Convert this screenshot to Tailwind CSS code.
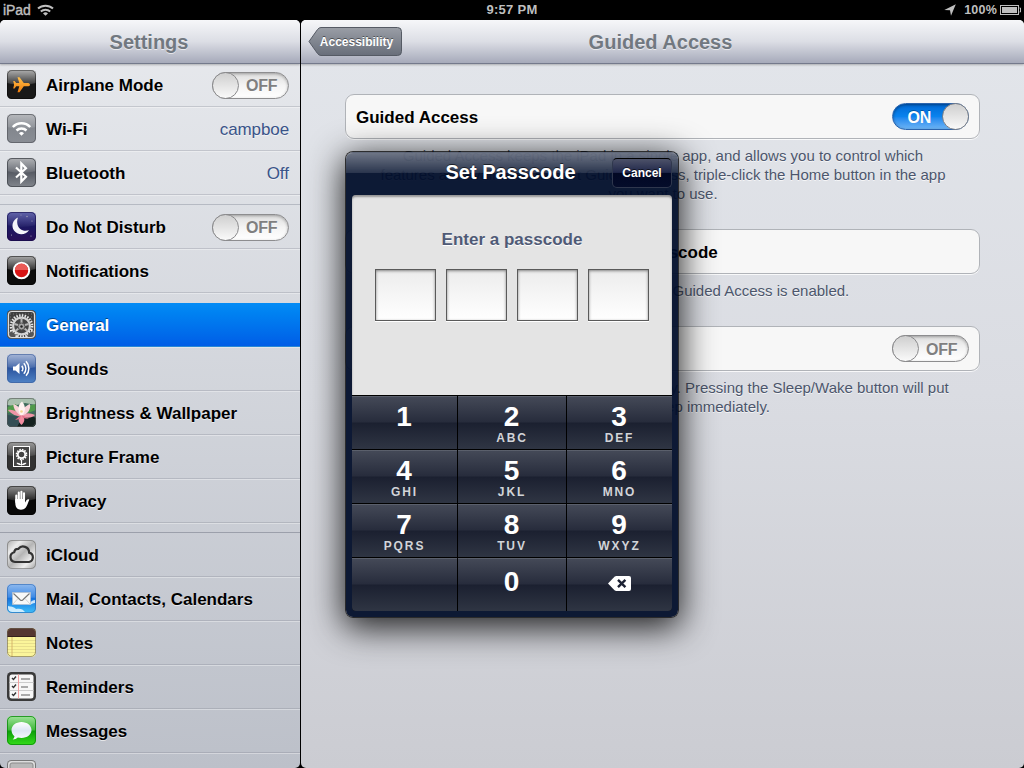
<!DOCTYPE html>
<html lang="en">
    <head>
        <meta charset="UTF-8" />
        <meta name="viewport" content="width=device-width, initial-scale=1.0" />
        <title>Settings - Guided Access</title>
        <script src="https://cdn.jsdelivr.net/npm/@tailwindcss/browser@4"></script>
    </head>
    <body class="bg-black overflow-hidden font-['Liberation_Sans',Arial,sans-serif]">
        <!-- shared gradients for the icons -->
        <svg class="absolute" width="0" height="0" aria-hidden="true">
            <defs>
                <linearGradient id="gloss" x1="0" y1="0" x2="0" y2="1">
                    <stop offset="0" stop-color="#fff" stop-opacity=".65" />
                    <stop offset="1" stop-color="#fff" stop-opacity=".12" />
                </linearGradient>
                <linearGradient id="orange" x1="0" y1="0" x2="0" y2="1">
                    <stop offset="0" stop-color="#ffc04a" />
                    <stop offset="1" stop-color="#f07d0c" />
                </linearGradient>
                <linearGradient id="gray" x1="0" y1="0" x2="0" y2="1">
                    <stop offset="0" stop-color="#7b7f86" />
                    <stop offset="1" stop-color="#8a8e95" />
                </linearGradient>
                <linearGradient id="slate" x1="0" y1="0" x2="0" y2="1">
                    <stop offset="0" stop-color="#6d7178" />
                    <stop offset=".5" stop-color="#575b64" />
                    <stop offset="1" stop-color="#82868d" />
                </linearGradient>
                <linearGradient id="night" x1="0" y1="0" x2="0" y2="1">
                    <stop offset="0" stop-color="#3c3f96" />
                    <stop offset=".5" stop-color="#1c1862" />
                    <stop offset="1" stop-color="#2a0f58" />
                </linearGradient>
                <linearGradient id="blue" x1="0" y1="0" x2="0" y2="1">
                    <stop offset="0" stop-color="#5a78b4" />
                    <stop offset=".5" stop-color="#2c559f" />
                    <stop offset="1" stop-color="#4f83c6" />
                </linearGradient>
                <linearGradient id="metal" x1="0" y1="0" x2="1" y2="1">
                    <stop offset="0" stop-color="#a9a9a9" />
                    <stop offset=".25" stop-color="#ececec" />
                    <stop offset=".5" stop-color="#b5b5b5" />
                    <stop offset=".75" stop-color="#eee" />
                    <stop offset="1" stop-color="#a0a0a0" />
                </linearGradient>
                <linearGradient id="sky" x1="0" y1="0" x2="0" y2="1">
                    <stop offset="0" stop-color="#8fb9ee" />
                    <stop offset=".45" stop-color="#3f8be6" />
                    <stop offset=".5" stop-color="#1673de" />
                    <stop offset="1" stop-color="#3fc0fa" />
                </linearGradient>
                <linearGradient id="green" x1="0" y1="0" x2="0" y2="1">
                    <stop offset="0" stop-color="#9fe39a" />
                    <stop offset=".48" stop-color="#3fb83a" />
                    <stop offset=".52" stop-color="#0c9d0a" />
                    <stop offset="1" stop-color="#35dd1a" />
                </linearGradient>
                <linearGradient id="bubble" x1="0" y1="0" x2="0" y2="1">
                    <stop offset="0" stop-color="#fff" />
                    <stop offset=".5" stop-color="#dce6f4" />
                    <stop offset="1" stop-color="#f8fbff" />
                </linearGradient>
                <clipPath id="tile"><rect width="29" height="29" rx="4.5" /></clipPath>
            </defs>
        </svg>

        <div class="relative w-[1024px] h-[768px] overflow-hidden">
            <!-- status bar -->
            <div class="h-5 flex items-center justify-between text-[#bfbfbf] text-[13px] font-bold leading-5">
                <div class="w-1/3 flex items-center pl-[3px]">
                    <span class="text-[14px] font-normal tracking-[-0.1px] [-webkit-text-stroke:0.4px_#bfbfbf]">iPad</span>
                    <svg class="ml-[6px]" width="17" height="12" viewBox="0 0 17 12" fill="none" stroke="#bfbfbf" stroke-width="2">
                        <path d="M1 4.6a11 11 0 0 1 15 0M3.8 7.5a7 7 0 0 1 9.4 0" />
                        <path d="M8.5 11.8L6 9.4a3.8 3.8 0 0 1 5 0z" fill="#bfbfbf" stroke="none" />
                    </svg>
                </div>
                <div class="tracking-[0.3px]">9:57 PM</div>
                <div class="w-1/3 flex items-center justify-end pr-[2px]">
                    <svg width="12" height="12" viewBox="0 0 12 12" fill="#bfbfbf"><path d="M11.800.200L7 11.800 6 6.300.3 5.900z" /></svg>
                    <span class="ml-[8px] text-[12.5px] tracking-[0.2px]">100%</span>
                    <svg class="ml-[3px]" width="22" height="10" viewBox="0 0 22 10">
                        <rect x=".5" y=".5" width="18" height="9" fill="none" stroke="#bfbfbf" />
                        <rect x="2" y="2" width="15" height="6" fill="#bfbfbf" />
                        <path d="M19.5 3h1v4h-1" fill="none" stroke="#bfbfbf" />
                    </svg>
                </div>
            </div>

            <div class="flex h-[748px] gap-px">
                <!-- sidebar -->
                <div class="w-[300px] flex flex-col rounded-[5px] overflow-hidden bg-linear-to-b from-[#e8eaee] to-[#bcc0c9]">
                    <div class="relative z-10 h-[44px] shrink-0 flex items-center justify-center border-b border-[#747a8c] bg-linear-to-b from-[#f6f7f9] via-[#dcdee5] to-[#a6aaba] shadow-[0_1px_2px_rgba(0,0,0,0.25)]">
                        <h1 class="text-[20px] font-bold text-[#717880] [text-shadow:0_1px_0_rgba(255,255,255,0.6)] pr-[2px] pt-px">Settings</h1>
                    </div>
                    <ul class="-mt-px text-[17px] font-bold text-black [text-shadow:0_1px_0_rgba(255,255,255,0.6)] *:h-[44px] *:flex *:items-center *:pl-[7px] *:pr-[11px] *:gap-[10px] *:border-b *:border-[#7d8290]/30 *:shadow-[0_1px_0_rgba(255,255,255,0.35)]">
                        <li>
                            <svg width="29" height="29" viewBox="0 0 29 29">
                                <rect width="29" height="29" rx="4.5" fill="#191919" />
                                <path d="M0 4.500Q0 0 4.500 0H24.500Q29 0 29 4.500V13Q14.500 17 0 13z" fill="url(#gloss)" />
                                <path d="M23 14.700c0-.9-1.200-1.600-2.600-1.600h-3.600L12.500 7.300h-2l1.800 5.800H9.200L7.600 11H6.200l.9 3.700-.9 3.700h1.400l1.600-2.100h3.100l-1.800 6h2l4.300-6h3.600c1.400 0 2.600-.7 2.600-1.600z" fill="url(#orange)" />
                                <rect x=".5" y=".5" width="28" height="28" rx="4.500" fill="none" stroke="#000" stroke-opacity=".4" />
                            </svg>
                            <span class="flex-1 pt-[2px]">Airplane Mode</span>
                            <span class="mt-px w-[77px] h-[27px] flex items-center rounded-full border border-[#8d8d8f] bg-linear-to-b from-[#dedede] via-[#f4f4f4] to-white shadow-[inset_0_1px_3px_rgba(0,0,0,0.3)] text-[#7f7f7f]">
                                <span class="size-[27px] -ml-px rounded-full border border-[#8a8a8c] bg-linear-to-b from-[#cfcfcf] to-[#fafafa]"></span>
                                <span class="ml-[7px] pt-px text-[16px] tracking-[-0.2px]">OFF</span>
                            </span>
                        </li>
                        <li>
                            <svg width="29" height="29" viewBox="0 0 29 29">
                                <rect width="29" height="29" rx="4.500" fill="url(#gray)" />
                                <path d="M0 4.500Q0 0 4.500 0H24.500Q29 0 29 4.500V13Q14.500 17 0 13z" fill="url(#gloss)" opacity=".7" />
                                <g fill="none" stroke="#fff" stroke-width="2.500">
                                    <path d="M5.800 13a12 12 0 0 1 17.400 0M9.500 16.500a7.300 7.300 0 0 1 10 0" />
                                    <path d="M14.500 21.800L12 19.200a3.800 3.800 0 0 1 5 0z" fill="#fff" stroke="none" />
                                </g>
                                <rect x=".5" y=".5" width="28" height="28" rx="4.500" fill="none" stroke="#5b5e64" stroke-opacity=".8" />
                            </svg>
                            <span class="flex-1 pt-[2px]">Wi-Fi</span>
                            <span class="pt-[2px] font-normal tracking-[-0.1px] text-[#3a5489]">campboe</span>
                        </li>
                        <li>
                            <svg width="29" height="29" viewBox="0 0 29 29">
                                <rect width="29" height="29" rx="4.500" fill="url(#slate)" />
                                <path d="M0 4.500Q0 0 4.500 0H24.500Q29 0 29 4.500V13Q14.500 17 0 13z" fill="url(#gloss)" opacity=".7" />
                                <path d="M9 9.500l10 9.200-4.700 4.800V5.500l4.700 4.800L9 19.500" fill="none" stroke="#fff" stroke-width="2.200" />
                                <rect x=".5" y=".5" width="28" height="28" rx="4.500" fill="none" stroke="#44474d" stroke-opacity=".8" />
                            </svg>
                            <span class="flex-1 pt-[2px]">Bluetooth</span>
                            <span class="pt-[2px] font-normal text-[#3a5489]">Off</span>
                        </li>
                    </ul>
                    <ul class="mt-[9px] border-t border-[#7d8290]/40 text-[17px] font-bold text-black [text-shadow:0_1px_0_rgba(255,255,255,0.6)] *:h-[44px] *:flex *:items-center *:pl-[7px] *:pr-[11px] *:gap-[10px] *:border-b *:border-[#7d8290]/30 *:shadow-[0_1px_0_rgba(255,255,255,0.35)]">
                        <li>
                            <svg width="29" height="29" viewBox="0 0 29 29">
                                <rect width="29" height="29" rx="4.500" fill="url(#night)" />
                                <path d="M0 4.500Q0 0 4.500 0H24.500Q29 0 29 4.500V13Q14.500 17 0 13z" fill="url(#gloss)" opacity=".3" />
                                <path d="M11 5.500C5.500 8 4 14 7 18.500c3.500 5 11.500 5 15-.2-6 1.700-10.500-1.300-11.500-5.800-.5-2.500-.5-4.500.5-7z" fill="#f4f4fa" />
                                <g fill="#aab"><circle cx="20" cy="4.500" r=".7" /><circle cx="25" cy="9" r=".6" /><circle cx="4.500" cy="23" r=".6" /><circle cx="14" cy="3" r=".5" /><circle cx="24" cy="24" r=".6" /></g>
                                <rect x=".5" y=".5" width="28" height="28" rx="4.500" fill="none" stroke="#120c48" stroke-opacity=".6" />
                            </svg>
                            <span class="flex-1 pt-[2px]">Do Not Disturb</span>
                            <span class="mt-px w-[77px] h-[27px] flex items-center rounded-full border border-[#8d8d8f] bg-linear-to-b from-[#dedede] via-[#f4f4f4] to-white shadow-[inset_0_1px_3px_rgba(0,0,0,0.3)] text-[#7f7f7f]">
                                <span class="size-[27px] -ml-px rounded-full border border-[#8a8a8c] bg-linear-to-b from-[#cfcfcf] to-[#fafafa]"></span>
                                <span class="ml-[7px] pt-px text-[16px] tracking-[-0.2px]">OFF</span>
                            </span>
                        </li>
                        <li>
                            <svg width="29" height="29" viewBox="0 0 29 29">
                                <rect width="29" height="29" rx="4.500" fill="#0c0c0c" />
                                <path d="M0 4.500Q0 0 4.500 0H24.500Q29 0 29 4.500V13Q14.500 17 0 13z" fill="url(#gloss)" />
                                <circle cx="14.500" cy="14.500" r="7.700" fill="#d81414" stroke="#fff" stroke-width="2" />
                                <path d="M8 14a6.500 6.500 0 0 1 13 0z" fill="#ea5a56" />
                                <rect x=".5" y=".5" width="28" height="28" rx="4.500" fill="none" stroke="#000" stroke-opacity=".5" />
                            </svg>
                            <span class="pt-[2px]">Notifications</span>
                        </li>
                    </ul>
                    <ul class="mt-[10px] text-[17px] font-bold text-black [text-shadow:0_1px_0_rgba(255,255,255,0.6)] *:h-[44px] *:flex *:items-center *:pl-[7px] *:pr-[11px] *:gap-[10px] *:border-b *:border-[#7d8290]/30 *:shadow-[0_1px_0_rgba(255,255,255,0.35)]">
                        <li class="bg-linear-to-b from-[#058cf5] to-[#015de6] text-white [text-shadow:0_-1px_0_rgba(0,0,0,0.45)]">
                            <svg width="29" height="29" viewBox="0 0 29 29">
                                <g clip-path="url(#tile)">
                                    <rect width="29" height="29" fill="#3e3e3e" />
                                    <path d="M3 4h23M3 7h23M3 10h23" stroke="#777" stroke-width="1" stroke-dasharray="1 2" />
                                    <circle cx="14.500" cy="16" r="10.500" fill="none" stroke="#e6e6e6" stroke-width="2.600" stroke-dasharray="1.500 1.250" />
                                    <circle cx="14.500" cy="16" r="8.400" fill="#444" stroke="#d2d2d2" stroke-width="2.200" />
                                    <path d="M14.500 16V9M14.500 16l-6 5M14.500 16l6 5M14.500 16l-7-2M14.500 16l7-2" stroke="#b4b4b4" stroke-width="2" />
                                    <circle cx="14.500" cy="16.500" r="3.500" fill="#a5a5a5" stroke="#555" />
                                    <circle cx="14.500" cy="16.500" r="1.200" fill="#222" />
                                    <circle cx="4" cy="26.500" r="5.500" fill="#555" stroke="#e6e6e6" stroke-width="2.200" stroke-dasharray="1.500 1.200" />
                                    <circle cx="25" cy="26.500" r="5.500" fill="#555" stroke="#e6e6e6" stroke-width="2.200" stroke-dasharray="1.500 1.200" />
                                </g>
                                <rect x=".5" y=".5" width="28" height="28" rx="4.500" fill="none" stroke="#5c5c5c" />
                                <rect x="1.500" y="1.500" width="26" height="26" rx="3.500" fill="none" stroke="#dcdcdc" stroke-width="1.200" />
                            </svg>
                            <span class="pt-[2px]">General</span>
                        </li>
                        <li>
                            <svg width="29" height="29" viewBox="0 0 29 29">
                                <rect width="29" height="29" rx="4.500" fill="url(#blue)" />
                                <path d="M0 4.500Q0 0 4.500 0H24.500Q29 0 29 4.500V13Q14.500 17 0 13z" fill="url(#gloss)" opacity=".7" />
                                <path d="M6 12.500h2.500l4-3.500v11l-4-3.500H6z" fill="#fff" />
                                <path d="M14.800 11.700a4.500 4.500 0 0 1 0 5.600M16.800 9.300a7.500 7.500 0 0 1 0 10.400M19 7.300a10.500 10.500 0 0 1 0 14.400" fill="none" stroke="#fff" stroke-width="1.500" />
                                <rect x=".5" y=".5" width="28" height="28" rx="4.500" fill="none" stroke="#3c5c98" stroke-opacity=".6" />
                            </svg>
                            <span class="pt-[2px]">Sounds</span>
                        </li>
                        <li>
                            <svg width="29" height="29" viewBox="0 0 29 29">
                                <g clip-path="url(#tile)">
                                    <rect width="29" height="29" fill="#3f6b5c" />
                                    <path d="M0 0h29v7L18 5 6 8 0 7z" fill="#a9c0ae" />
                                    <path d="M0 9l9-3 3 6-12 3zM20 8l9-2v6l-8 3z" fill="#4f9a4a" />
                                    <path d="M0 17l10 1 5 5-3 6H0z" fill="#344e55" />
                                    <path d="M14 22l9-5 6 3v9H10z" fill="#14211f" />
                                    <path d="M14.500 18C9 19 3 15 1 12c5-1 9 1 13.500 6zM15 18c4-4 8-3 13-1-3 3-8 4-13 1z" fill="#ee94a6" />
                                    <path d="M14 18C8 14 6 9 6.500 6c5 2 8 5 8 12zM15 18c-1-6 3-10 8-12 1 5-2 10-8 12z" fill="#f9d4d9" />
                                    <path d="M14.500 18.500C10 13 10.500 7 15 3.500c4 4.500 4 10-.5 15z" fill="#fff3f1" />
                                    <path d="M14.500 17c4 3 3.500 7 0 10-3.500-3-4-7 0-10z" fill="#f28c9f" />
                                    <path d="M14 17l-6 5 5-1zM15 17l7 4-6-1z" fill="#e2708a" />
                                    <circle cx="14.500" cy="13.500" r="1.300" fill="#f3d68d" />
                                </g>
                                <rect x=".5" y=".5" width="28" height="28" rx="4.500" fill="none" stroke="#555" stroke-opacity=".6" />
                            </svg>
                            <span class="pt-[2px]">Brightness &amp; Wallpaper</span>
                        </li>
                        <li>
                            <svg width="29" height="29" viewBox="0 0 29 29">
                                <rect width="29" height="29" rx="4.500" fill="#323232" />
                                <path d="M0 4.500Q0 0 4.500 0H24.500Q29 0 29 4.500V13Q14.500 17 0 13z" fill="url(#gloss)" opacity=".8" />
                                <rect x="6.500" y="4.500" width="16" height="20" fill="#444" stroke="#fff" />
                                <circle cx="14.500" cy="12.500" r="5" fill="none" stroke="#fff" stroke-width="1.600" stroke-dasharray="1.500 1.100" />
                                <circle cx="14.500" cy="12.500" r="3.700" fill="#444" stroke="#fff" stroke-width="1.800" />
                                <path d="M14.500 17.500v6" stroke="#fff" stroke-width="1.200" />
                                <path d="M14.500 23c-1.500-2-3.500-2.500-5-2 1 1.600 3 2.400 5 2zM14.500 23c1.500-2 3.500-2.500 5-2-1 1.600-3 2.400-5 2z" fill="#fff" />
                                <rect x=".5" y=".5" width="28" height="28" rx="4.500" fill="none" stroke="#222" stroke-opacity=".5" />
                            </svg>
                            <span class="pt-[2px]">Picture Frame</span>
                        </li>
                        <li>
                            <svg width="29" height="29" viewBox="0 0 29 29">
                                <rect width="29" height="29" rx="4.500" fill="#080808" />
                                <path d="M0 4.500Q0 0 4.500 0H24.500Q29 0 29 4.500V13Q14.500 17 0 13z" fill="url(#gloss)" opacity=".85" />
                                <path d="M9.300 16V9.500M11.800 14V6.500M14.400 14V5.700M17 14V7.200" stroke="#fff" stroke-width="2.100" stroke-linecap="round" />
                                <path d="M8.300 13H18v3.500c.8-1.500 1.800-3.300 3.500-3.300.7 0 .8.500.5 1.200-1.500 3-2.300 9.300-8 9.300-4.500 0-5.700-3.700-5.700-7z" fill="#fff" />
                                <rect x=".5" y=".5" width="28" height="28" rx="4.500" fill="none" stroke="#000" stroke-opacity=".5" />
                            </svg>
                            <span class="pt-[2px]">Privacy</span>
                        </li>
                    </ul>
                    <ul class="mt-[9px] border-t border-[#7d8290]/60 text-[17px] font-bold text-black [text-shadow:0_1px_0_rgba(255,255,255,0.6)] *:h-[44px] *:shrink-0 *:flex *:items-center *:pl-[7px] *:pr-[11px] *:gap-[10px] *:border-b *:border-[#7d8290]/30 *:shadow-[0_1px_0_rgba(255,255,255,0.35)]">
                        <li>
                            <svg width="29" height="29" viewBox="0 0 29 29">
                                <rect width="29" height="29" rx="4.500" fill="url(#metal)" />
                                <path d="M8 22a5 5 0 0 1-.8-9.800 4 4 0 0 1 4.200-3.400 6 6 0 0 1 10.700 3.800A4.800 4.800 0 0 1 22 22z" fill="none" stroke="#333" stroke-width="2.200" />
                                <rect x=".5" y=".5" width="28" height="28" rx="4.500" fill="none" stroke="#777" stroke-opacity=".7" />
                            </svg>
                            <span class="pt-[2px]">iCloud</span>
                        </li>
                        <li>
                            <svg width="29" height="29" viewBox="0 0 29 29">
                                <rect width="29" height="29" rx="4.500" fill="url(#sky)" />
                                <path d="M1 22c3 1 5 0 8 3 4-1 7 0 9 3H5q-4 0-4-4zM20 20c3-1 5-4 8-4v3c-3 0-4 3-8 1z" fill="#e6f6ff" opacity=".85" />
                                <rect x="5.500" y="8.500" width="18" height="12" fill="#f8f8f8" stroke="#b5bfcc" stroke-width=".7" />
                                <path d="M6 20l5-5.500M23 20l-5-5.500" fill="none" stroke="#c4c4c4" stroke-width=".7" />
                                <path d="M6.500 9.500l6.800 6.500q1.200 1 2.400 0L22.500 9.500" fill="none" stroke="#777" stroke-width="1.100" />
                                <rect x=".5" y=".5" width="28" height="28" rx="4.500" fill="none" stroke="#2f68b0" stroke-opacity=".6" />
                            </svg>
                            <span class="pt-[2px]">Mail, Contacts, Calendars</span>
                        </li>
                        <li>
                            <svg width="29" height="29" viewBox="0 0 29 29">
                                <g clip-path="url(#tile)">
                                    <rect width="29" height="29" fill="#fbf59a" />
                                    <rect width="29" height="8.500" fill="#553731" />
                                    <rect y="8" width="29" height="1" fill="#35211d" />
                                    <path d="M0 12.500h29M0 15.500h29M0 18.500h29M0 21.500h29M0 24.500h29" stroke="#dfd588" stroke-width=".7" />
                                    <path d="M5 9v20" stroke="#d0a860" stroke-width=".8" />
                                </g>
                                <rect x=".5" y=".5" width="28" height="28" rx="4.500" fill="none" stroke="#6b6150" stroke-opacity=".6" />
                            </svg>
                            <span class="pt-[2px]">Notes</span>
                        </li>
                        <li>
                            <svg width="29" height="29" viewBox="0 0 29 29">
                                <rect width="29" height="29" rx="4.500" fill="#3a3a3a" />
                                <rect x="2.500" y="2.500" width="24" height="24" rx="2.500" fill="#f7f7f7" />
                                <path d="M2.500 10.500h24M2.500 18.500h24" stroke="#ccc" />
                                <path d="M11.500 2.500v24" stroke="#f3a0a0" />
                                <path d="M5 6l1.500 1.500L9 4.500M5 14l1.500 1.500L9 12.500M5 22l1.500 1.500L9 20.500" fill="none" stroke="#333" stroke-width="1.400" />
                                <path d="M14 7h9M14 15h7M14 23h9" stroke="#aaa" stroke-width="2" />
                            </svg>
                            <span class="pt-[2px]">Reminders</span>
                        </li>
                        <li>
                            <svg width="29" height="29" viewBox="0 0 29 29">
                                <rect width="29" height="29" rx="4.500" fill="url(#green)" />
                                <path d="M14.500 6c5.600 0 10 3.600 10 8s-4.400 8-10 8c-1.300 0-2.500-.2-3.700-.5-1.300 1.200-3 1.900-5 2 .9-.9 1.500-1.900 1.700-3.200-1.900-1.500-3-3.700-3-6.300 0-4.400 4.400-8 10-8z" fill="url(#bubble)" />
                                <rect x=".5" y=".5" width="28" height="28" rx="4.500" fill="none" stroke="#0b8a0b" stroke-opacity=".8" />
                            </svg>
                            <span class="pt-[2px]">Messages</span>
                        </li>
                        <li>
                            <svg width="29" height="29" viewBox="0 0 29 29">
                                <rect width="29" height="29" rx="4.500" fill="#777" />
                                <rect x="1" y="1" width="27" height="27" rx="3.500" fill="#ddd" />
                                <rect x="3" y="3" width="23" height="23" rx="2" fill="#b8b8b8" stroke="#8a8a8a" />
                            </svg>
                        </li>
                    </ul>
                </div>

                <!-- detail pane -->
                <div class="w-[723px] flex flex-col rounded-[5px] overflow-hidden bg-linear-to-b from-[#e3e6eb] via-[#dadce2] to-[#cbccd2]">
                    <div class="relative h-[44px] shrink-0 flex items-center justify-center border-b border-[#747a8c] bg-linear-to-b from-[#f6f7f9] via-[#dcdee5] to-[#a6aaba] shadow-[0_1px_2px_rgba(0,0,0,0.25)]">
                        <button class="absolute left-[7px] top-[7px] w-[94px] h-[29px] text-[12px] font-bold text-white [text-shadow:0_-1px_0_rgba(0,0,0,0.45)]">
                            <svg class="absolute inset-0" width="94" height="29" viewBox="0 0 94 29">
                                <defs>
                                    <linearGradient id="back" x1="0" y1="0" x2="0" y2="1">
                                        <stop offset="0" stop-color="#9a9ea6" />
                                        <stop offset="1" stop-color="#686e7a" />
                                    </linearGradient>
                                </defs>
                                <path d="M1 14.500L9.500 2.500Q11 .5 13 .5H89.500Q93.500 .5 93.500 4.500V24.500Q93.500 28.500 89.500 28.500H13Q11 28.500 9.500 26.500z" fill="url(#back)" stroke="#555a64" />
                            </svg>
                            <span class="relative pl-[3px]">Accessibility</span>
                        </button>
                        <h2 class="text-[20px] font-bold text-[#717880] [text-shadow:0_1px_0_rgba(255,255,255,0.6)] pt-px pr-[4px]">Guided Access</h2>
                    </div>

                    <div class="pl-[44px] w-[679px] mt-[30px] text-[15px] leading-[19px] text-center text-[#4c566c] [text-shadow:0_1px_0_rgba(255,255,255,0.7)]">
                        <div class="h-[45px] px-[10px] flex items-center justify-between rounded-[9px] border border-[#b0b3b8] bg-[#f7f7f7] shadow-[0_1px_0_rgba(255,255,255,0.8)] text-[17px] font-bold text-black">
                            <span class="pt-[2px]">Guided Access</span>
                            <span class="w-[77px] h-[27px] flex items-center justify-end rounded-full border border-[#2a64ae] bg-linear-to-b from-[#0168d4] via-[#0a83ee] to-[#6bb4f5] shadow-[inset_0_1px_3px_rgba(0,0,0,0.4)] text-white [text-shadow:0_-1px_0_rgba(0,0,0,0.3)]">
                                <span class="mr-[11px] pt-px text-[16px] tracking-[-0.3px]">ON</span>
                                <span class="size-[27px] -mr-px rounded-full border border-[#7c7f86] bg-linear-to-b from-[#cfcfcf] to-[#fafafa]"></span>
                            </span>
                        </div>
                        <p class="mt-[7px] whitespace-nowrap pl-px">
                            Guided Access keeps the iPad in a single app, and allows you to control which<br />
                            features are available. To start Guided Access, triple-click the Home button in the app<br />
                            you want to use.
                        </p>
                        <div class="mt-[26px] h-[45px] pt-[2px] flex items-center justify-center rounded-[9px] border border-[#b0b3b8] bg-[#f7f7f7] shadow-[0_1px_0_rgba(255,255,255,0.8)] text-[17px] font-bold text-black">Set Passcode</div>
                        <p class="mt-[7px]">Set the passcode used when Guided Access is enabled.</p>
                        <div class="mt-[26px] h-[45px] px-[10px] flex items-center justify-between rounded-[9px] border border-[#b0b3b8] bg-[#f7f7f7] shadow-[0_1px_0_rgba(255,255,255,0.8)] text-[17px] font-bold text-black">
                            <span class="pt-[2px]">Enable Screen Sleep</span>
                            <span class="w-[77px] h-[27px] flex items-center rounded-full border border-[#8d8d8f] bg-linear-to-b from-[#dedede] via-[#f4f4f4] to-white shadow-[inset_0_1px_3px_rgba(0,0,0,0.3)] text-[#7f7f7f]">
                                <span class="size-[27px] -ml-px rounded-full border border-[#8a8a8c] bg-linear-to-b from-[#cfcfcf] to-[#fafafa]"></span>
                                <span class="ml-[7px] pt-px text-[16px] tracking-[-0.2px]">OFF</span>
                            </span>
                        </div>
                        <p class="mt-[7px] whitespace-nowrap pl-[8px]">
                            iPad screen will dim and sleep automatically. Pressing the Sleep/Wake button will put<br />
                            <span class="pl-[8px]">the iPad to sleep immediately.</span>
                        </p>
                    </div>
                </div>
            </div>

            <!-- passcode dialog -->
            <div class="absolute z-20 left-[345px] top-[151px] w-[334px] h-[467px] rounded-[8px] border border-black/80 shadow-[0_8px_34px_2px_rgba(0,0,0,0.85)] bg-[#000d2a]/94 bg-clip-padding">
                <div class="absolute inset-x-0 top-0 h-[21px] rounded-t-[7px] bg-linear-to-b from-white/40 to-white/12 border-t border-white/25"></div>
                <div class="relative h-[43px] flex items-center justify-center text-white">
                    <h3 class="text-[20px] font-bold [text-shadow:0_-1px_0_rgba(0,0,0,0.6)] pb-[4px] pr-[3px]">Set Passcode</h3>
                    <button class="absolute right-[6px] top-[6px] w-[60px] h-[30px] rounded-[5px] border border-[#2f374d] border-t-black bg-[linear-gradient(#4d5269,#20274a_48%,#020824_50%,#040c2a)] text-[12px] font-bold [text-shadow:0_-1px_0_rgba(0,0,0,0.6)]">Cancel</button>
                </div>
                <div class="relative mx-[6px] h-[200px] rounded-t-[4px] bg-[#e4e4e4] shadow-[inset_0_2px_2px_rgba(0,0,0,0.35)] flex flex-col items-center">
                    <p class="mt-[33px] text-[17px] leading-[24px] font-bold text-[#4f5a76] [text-shadow:0_1px_0_#fff]">Enter a passcode</p>
                    <div class="mt-[17px] flex gap-[10px] *:w-[61px] *:h-[52px] *:border *:border-[#5a5a5a] *:bg-linear-to-b *:from-[#ececec] *:to-white *:shadow-[inset_0_1px_3px_rgba(0,0,0,0.45),0_1px_0_#fff]">
                        <div></div>
                        <div></div>
                        <div></div>
                        <div></div>
                    </div>
                </div>
                <div class="relative mx-[6px] grid grid-cols-[105px_108px_105px] auto-rows-[53px] gap-px pt-px bg-black rounded-b-[4px] overflow-hidden text-white text-center font-bold *:flex *:flex-col *:items-center *:bg-[linear-gradient(#454a58,#272c3c_49%,#1b2030_51%,#2f3543)] *:shadow-[inset_0_1px_0_rgba(255,255,255,0.12)] [&_b]:text-[28px] [&_b]:leading-[28px] [&_b]:mt-[7px] [&_b]:pr-px [&_small]:mt-px [&_small]:text-[12px] [&_small]:leading-[12px] [&_small]:tracking-[1.9px] [&_small]:text-[#d2d4d8]">
                    <div><b>1</b></div>
                    <div><b>2</b><small>ABC</small></div>
                    <div><b>3</b><small>DEF</small></div>
                    <div><b>4</b><small>GHI</small></div>
                    <div><b>5</b><small>JKL</small></div>
                    <div><b>6</b><small>MNO</small></div>
                    <div><b>7</b><small>PQRS</small></div>
                    <div><b>8</b><small>TUV</small></div>
                    <div><b>9</b><small>WXYZ</small></div>
                    <div></div>
                    <div class="pt-[3px]"><b>0</b></div>
                    <div>
                        <svg class="mt-[18px]" width="23" height="15" viewBox="0 0 23 15">
                            <path d="M0 7.500L6.500.8Q7.300 0 8.500 0H21Q23 0 23 2V13Q23 15 21 15H8.500Q7.300 15 6.500 14.200z" fill="#fff" />
                            <path d="M10 3.800l7.400 7.400M17.400 3.800L10 11.200" stroke="#1c2133" stroke-width="2.400" />
                        </svg>
                    </div>
                </div>
            </div>
        </div>
    </body>
</html>
